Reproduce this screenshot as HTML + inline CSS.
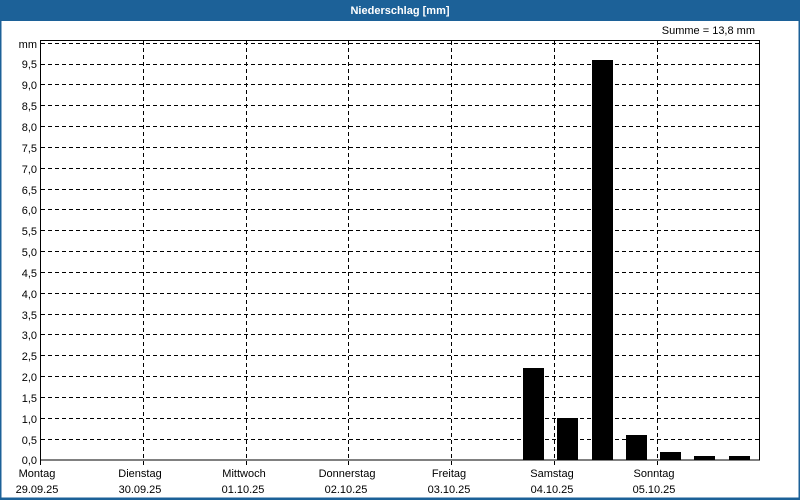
<!DOCTYPE html>
<html><head><meta charset="utf-8"><style>
html,body{margin:0;padding:0;background:#fff}
body{width:800px;height:500px;overflow:hidden;position:relative;font-family:"Liberation Sans",sans-serif}
</style></head><body>
<svg width="800" height="500" xmlns="http://www.w3.org/2000/svg" style="position:absolute;left:0;top:0" font-family="Liberation Sans, sans-serif" font-size="11">
<rect x="0" y="0" width="800" height="500" fill="#fff"/>
<rect x="0" y="0" width="800" height="21" fill="#1c6198"/>
<rect x="0" y="0" width="1.5" height="500" fill="#1c6198"/>
<rect x="798.5" y="0" width="1.5" height="500" fill="#1c6198"/>
<rect x="0" y="497.5" width="800" height="2.5" fill="#1c6198"/>
<text x="400" y="14" fill="#fff" font-weight="bold" text-anchor="middle">Niederschlag [mm]</text>
<text x="755" y="34" fill="#000" text-anchor="end">Summe = 13,8 mm</text>
<g stroke="#000" stroke-width="1" stroke-dasharray="4,3" fill="none">
<path d="M41 439.5H760M41 418.5H760M41 397.5H760M41 376.5H760M41 355.5H760M41 334.5H760M41 314.5H760M41 293.5H760M41 272.5H760M41 251.5H760M41 230.5H760M41 209.5H760M41 189.5H760M41 168.5H760M41 147.5H760M41 126.5H760M41 105.5H760M41 84.5H760M41 64.5H760M41 43.5H760"/>
<path d="M143.5 41V465M246.5 41V465M348.5 41V465M451.5 41V465M554.5 41V465M657.5 41V465"/>
</g>
<rect x="40.5" y="40.5" width="719" height="419.5" fill="none" stroke="#000" stroke-width="1"/>
<path d="M40.5 460V465" stroke="#000"/>
<g fill="#000">
<rect x="523" y="368" width="21" height="92"/>
<rect x="557" y="418" width="21" height="42"/>
<rect x="592" y="60" width="21" height="400"/>
<rect x="626" y="435" width="21" height="25"/>
<rect x="660" y="452" width="21" height="8"/>
<rect x="694" y="456" width="21" height="4"/>
<rect x="729" y="456" width="21" height="4"/>
</g>
<g text-anchor="end" fill="#000">
<text x="37" y="48">mm</text>
<text x="37" y="68">9,5</text><text x="37" y="89">9,0</text><text x="37" y="110">8,5</text><text x="37" y="131">8,0</text>
<text x="37" y="152">7,5</text><text x="37" y="173">7,0</text><text x="37" y="194">6,5</text><text x="37" y="214">6,0</text>
<text x="37" y="235">5,5</text><text x="37" y="256">5,0</text><text x="37" y="277">4,5</text><text x="37" y="298">4,0</text>
<text x="37" y="319">3,5</text><text x="37" y="339">3,0</text><text x="37" y="360">2,5</text><text x="37" y="381">2,0</text>
<text x="37" y="402">1,5</text><text x="37" y="423">1,0</text><text x="37" y="444">0,5</text><text x="37" y="464">0,0</text>
</g>
<g text-anchor="middle" fill="#000">
<text x="37" y="477">Montag</text><text x="37" y="493">29.09.25</text>
<text x="140" y="477">Dienstag</text><text x="140" y="493">30.09.25</text>
<text x="244" y="477">Mittwoch</text><text x="243" y="493">01.10.25</text>
<text x="347" y="477">Donnerstag</text><text x="346" y="493">02.10.25</text>
<text x="449" y="477">Freitag</text><text x="449" y="493">03.10.25</text>
<text x="552" y="477">Samstag</text><text x="552" y="493">04.10.25</text>
<text x="654" y="477">Sonntag</text><text x="654" y="493">05.10.25</text>
</g>
</svg>
</body></html>
